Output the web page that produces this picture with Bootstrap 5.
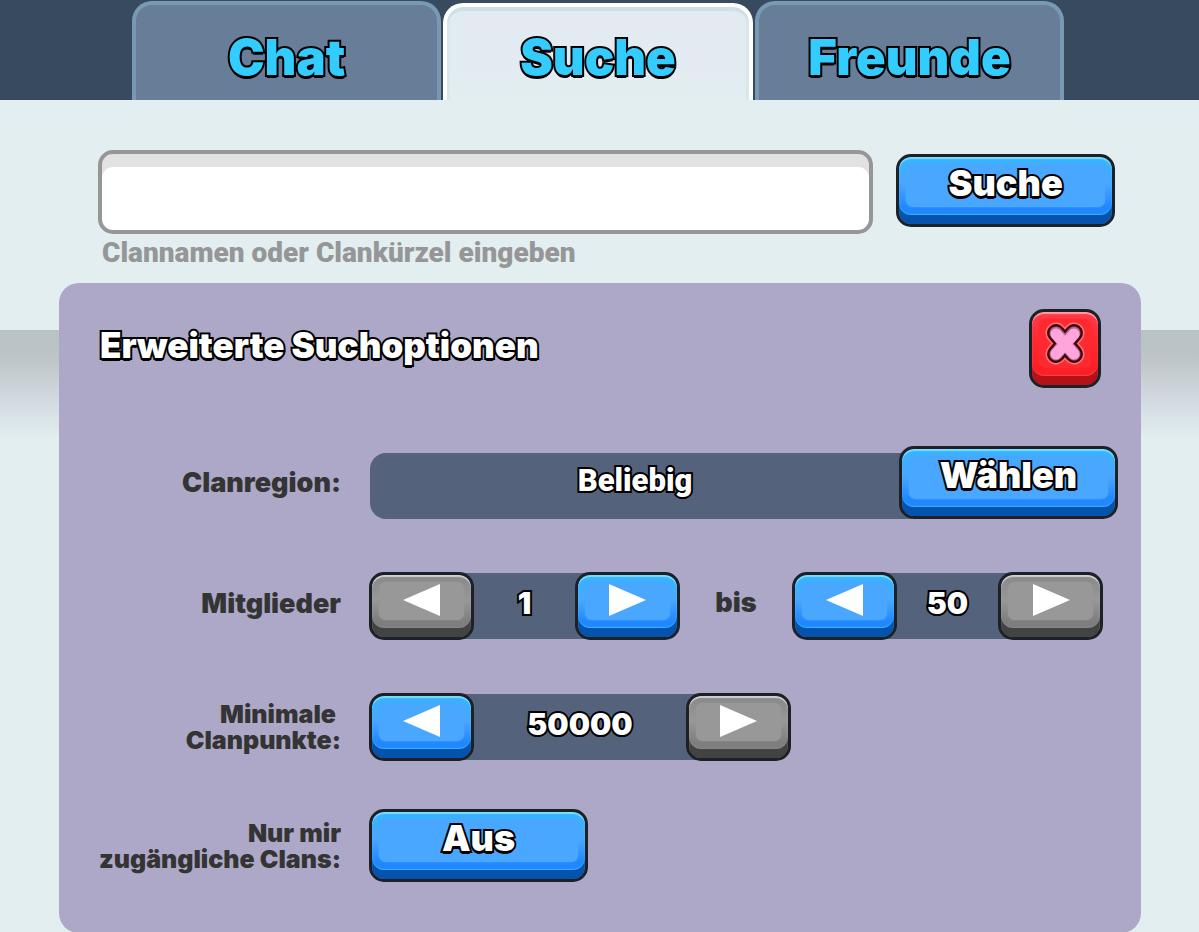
<!DOCTYPE html>
<html lang="de">
<head>
<meta charset="utf-8">
<meta name="viewport" content="width=device-width, initial-scale=1">
<title>Clansuche</title>
<link href="https://cdn.jsdelivr.net/npm/bootstrap@5.3.0/dist/css/bootstrap.min.css" rel="stylesheet">
<style>
  body { font-family: Inter, Roboto, "Liberation Sans", sans-serif; font-weight: 900; background: #e2eef0; color: #343434; }

  /* Tab bar */
  .tab-strip { background: #384a5d; padding: 1px 11.25% 0 11%; }
  .tab-grid { display: grid; grid-template-columns: repeat(3, 1fr); gap: 2px; }
  .game-tab { height: 99px; padding-top: 10px; border: 4px solid #7799b3; border-bottom: 0; border-radius: 20px 20px 0 0; background: #687d97; color: #33ccff; font-size: 49px; line-height: 1; text-decoration: none; }
  .game-tab:hover { color: #33ccff; }
  .game-tab.active { height: 97px; margin-top: 2px; padding-top: 8px; border-color: #fff; background: linear-gradient(#e2ebf2 60%, #e2eef0); box-shadow: inset 0 4px 0 #cfe0e5, inset 3px 0 0 #d9e7eb, inset -3px 0 0 #d9e7eb; }
  .outlined { -webkit-text-stroke: 4px #000; paint-order: stroke fill; text-shadow: 0 3px 0 #000; }

  /* Page area with the shaded edge behind the panel */
  .page-area { background: linear-gradient(#b9c2c6 0, #bcc4c7 25px, #d5dde3 75px, #e2eef0 110px) 0 230px / 100% 110px no-repeat; padding-top: 50px; }
  .search-row { padding: 0 7% 0 98px; gap: 23px; }
  .search-box { height: 84px; border: 4px solid #969696; border-radius: 15px; background: #fff; box-shadow: inset 0 13px 0 #e2e2e2; font-size: 32px; font-weight: 900; padding: 14px 16px 0; }
  .search-box:focus { border-color: #969696; box-shadow: inset 0 13px 0 #e2e2e2; }
  .hint { padding-left: 102px; color: #969696; font-family: Roboto, "Liberation Sans", sans-serif; font-size: 28px; line-height: 37px; }

  /* Raised buttons */
  .key { --edge: #0553ad; --lip: #2087ff; --face: #4aa7ff; --rim: #35b5ff; --shine: #7bdcff;
    border: 3px solid #1b2127; border-radius: 15px; color: #fff; font-family: inherit; font-weight: 900; padding: 0 0 14px; flex: none;
    display: inline-flex; align-items: center; justify-content: center; line-height: 1;
    background: linear-gradient(var(--rim), var(--face) 40%, var(--lip) 75%); position: relative; overflow: hidden;
    box-shadow: inset 0 2px 1px var(--shine), inset 0 -9px 0 var(--edge), inset 0 -10px 1px var(--rim); }
  .key::before { content: ""; position: absolute; inset: 7px 7px 17px; border-radius: 7px; background: var(--face); box-shadow: 0 0 2px var(--face); }
  .key > * { position: relative; }
  .key-gray { --edge: #434343; --lip: #7e7e7e; --face: #989898; --rim: #888; --shine: #d0d0d0; }
  .key-red { --edge: #b31217; --lip: #fa2026; --face: #ff2930; --rim: #ff3b4c; --shine: #ff9fa6; }
  .key-wide { width: 219px; height: 73px; font-size: 36px; padding-bottom: 16px; }
  .key-step { width: 105px; height: 68px; padding-bottom: 13px; }
  .key-close { width: 72px; height: 79px; padding-bottom: 9px; }

  /* Options panel */
  .options { margin: 12px 58px 0 59px; padding: 26px 23px 51px 32px; border-radius: 20px; background: #ada8c7; }
  .options-head { padding: 0 17px 0 9px; margin-bottom: 58px; }
  .options-head h1 { font-size: 35px; font-weight: 900; line-height: 1; color: #fff; padding-top: 19px; margin: 0; }
  .option-row { display: grid; grid-template-columns: 250px 1fr; column-gap: 28px; align-items: center; margin-bottom: 53px; }
  .option-row:last-child { margin: -5px 0 0; }
  .option-name { text-align: right; font-size: 27px; line-height: 26px; white-space: nowrap; }
  .name-long { font-size: 25px; }
  .value-bar { background: #55627c; color: #fff; }
  .region-bar { height: 66px; border-radius: 16px 0 0 16px; margin: 6px -1px 0 1px; font-family: Roboto, "Liberation Sans", sans-serif; font-size: 31px; line-height: 1; padding-bottom: 10px; box-shadow: 12px 0 0 #55627c; }
  .stepper { height: 68px; border-radius: 15px; background: linear-gradient(#55627c, #55627c) center / calc(100% - 30px) 66px no-repeat; color: #fff; font-size: 30px; line-height: 1; }
  .stepper-members { width: 311px; }
  .stepper-points { width: 422px; }
  .stepper output { padding-bottom: 7px; }
  .outlined-fine { -webkit-text-stroke: 4px #000; paint-order: stroke fill; text-shadow: 0 2px 0 #000; }
  .until { width: 112px; font-size: 27px; line-height: 26px; padding-bottom: 6px; }
</style>
</head>
<body>
<header class="tab-strip">
  <nav class="tab-grid" aria-label="Bereiche">
    <a class="game-tab d-flex align-items-center justify-content-center" href="#chat"><span class="outlined">Chat</span></a>
    <a class="game-tab active d-flex align-items-center justify-content-center" href="#suche" aria-current="page"><span class="outlined">Suche</span></a>
    <a class="game-tab d-flex align-items-center justify-content-center" href="#freunde"><span class="outlined">Freunde</span></a>
  </nav>
</header>

<main class="page-area">
  <form>
    <div class="search-row d-flex align-items-start">
      <input class="form-control search-box" type="text" id="clan">
      <button class="key key-wide mt-1" type="submit"><span class="outlined">Suche</span></button>
    </div>
    <label class="hint d-block" for="clan">Clannamen oder Clankürzel eingeben</label>

    <section class="options">
      <div class="options-head d-flex justify-content-between align-items-start">
        <h1 class="outlined">Erweiterte Suchoptionen</h1>
        <button class="key key-close key-red" type="button" aria-label="Schließen">
          <svg width="46" height="48" viewBox="0 0 46 48" fill="none">
            <g stroke-linecap="round" stroke="#ff7378" stroke-width="21"><path d="M14 13 32 34M32 13 14 34"/></g>
            <g stroke-linecap="round" stroke="#43040d" stroke-width="18"><path d="M14 13 32 34M32 13 14 34"/></g>
            <g stroke-linecap="round" stroke="#b5668d" stroke-width="13"><path d="M14 13 32 34M32 13 14 34"/></g>
            <g stroke-linecap="round" stroke="#ffa5dc" stroke-width="11"><path d="M14 14 32 34M32 14 14 34"/></g>
          </svg>
        </button>
      </div>

      <div class="option-row">
        <label class="option-name" for="region">Clanregion:</label>
        <div class="d-flex align-items-center">
          <div class="value-bar region-bar flex-grow-1 d-flex align-items-center justify-content-center"><span class="outlined-fine">Beliebig</span></div>
          <button class="key key-wide" type="button" id="region"><span class="outlined">Wählen</span></button>
        </div>
      </div>

      <div class="option-row">
        <div class="option-name pb-1" id="members">Mitglieder</div>
        <div class="d-flex align-items-center" role="group" aria-labelledby="members">
          <div class="stepper stepper-members d-flex align-items-center justify-content-between">
            <button class="key key-step key-gray" type="button" aria-label="Weniger"><svg width="38" height="34" viewBox="0 0 38 34" fill="#fff"><path d="M37 1V33L0 17Z"/></svg></button>
            <output class="outlined-fine">1</output>
            <button class="key key-step" type="button" aria-label="Mehr"><svg width="38" height="34" viewBox="0 0 38 34" fill="#fff"><path d="M1 1V33L38 17Z"/></svg></button>
          </div>
          <div class="until text-center">bis</div>
          <div class="stepper stepper-members d-flex align-items-center justify-content-between">
            <button class="key key-step" type="button" aria-label="Weniger"><svg width="38" height="34" viewBox="0 0 38 34" fill="#fff"><path d="M37 1V33L0 17Z"/></svg></button>
            <output class="outlined-fine">50</output>
            <button class="key key-step key-gray" type="button" aria-label="Mehr"><svg width="38" height="34" viewBox="0 0 38 34" fill="#fff"><path d="M1 1V33L38 17Z"/></svg></button>
          </div>
        </div>
      </div>

      <div class="option-row">
        <div class="option-name name-long" id="points">Minimale&nbsp;<br>Clanpunkte:</div>
        <div class="stepper stepper-points d-flex align-items-center justify-content-between" role="group" aria-labelledby="points">
          <button class="key key-step" type="button" aria-label="Weniger"><svg width="38" height="34" viewBox="0 0 38 34" fill="#fff"><path d="M37 1V33L0 17Z"/></svg></button>
          <output class="outlined-fine">50000</output>
          <button class="key key-step key-gray" type="button" aria-label="Mehr"><svg width="38" height="34" viewBox="0 0 38 34" fill="#fff"><path d="M1 1V33L38 17Z"/></svg></button>
        </div>
      </div>

      <div class="option-row">
        <label class="option-name name-long" for="open-only">Nur mir<br>zugängliche Clans:</label>
        <div><button class="key key-wide" type="button" id="open-only" aria-pressed="false"><span class="outlined">Aus</span></button></div>
      </div>
    </section>
  </form>
</main>
<script src="https://cdn.jsdelivr.net/npm/bootstrap@5.3.0/dist/js/bootstrap.bundle.min.js"></script>
</body>
</html>
